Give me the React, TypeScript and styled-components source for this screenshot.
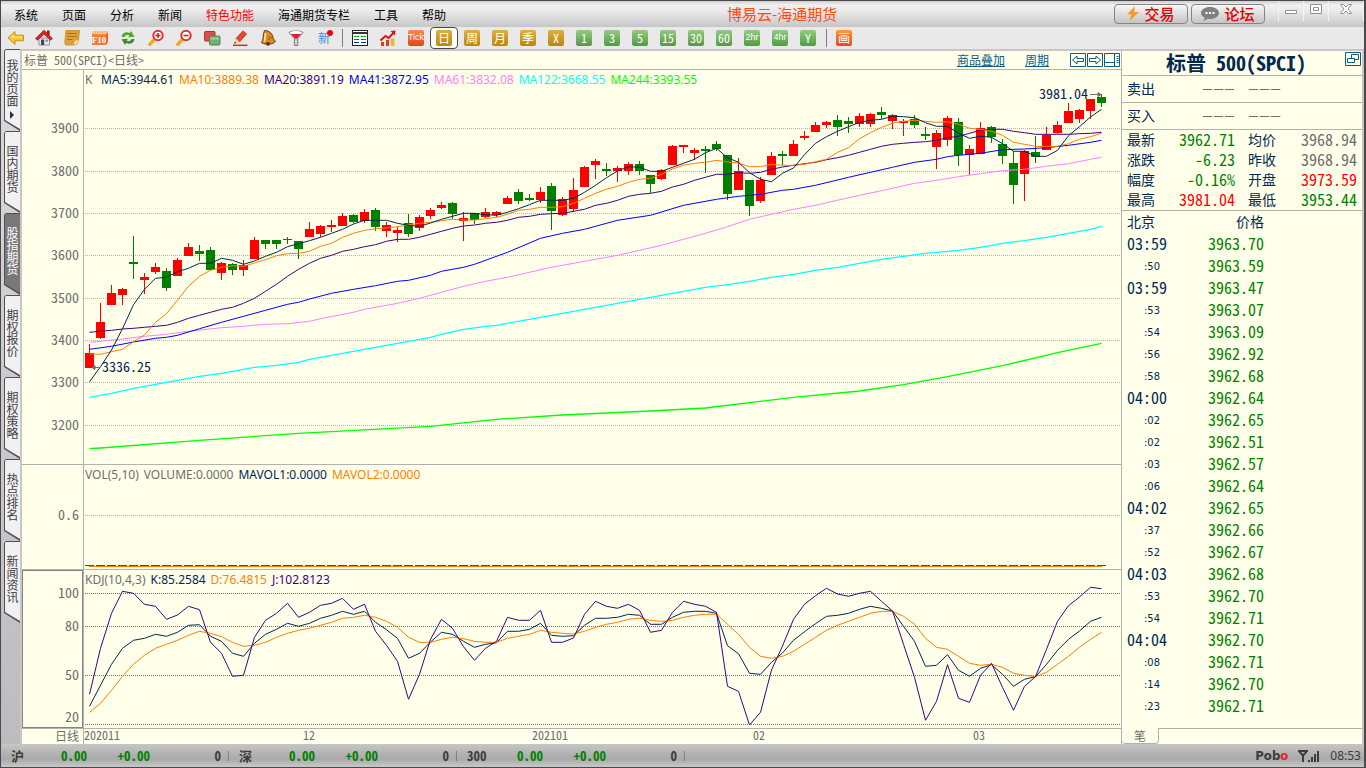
import React from 'react';
import styled, { createGlobalStyle, css } from 'styled-components';

const ink = '#002850';
const paper = '#ffffea';
const rule = '#b4b2b0';
const trim = '#cdc5c5';
const up = '#ff0000';
const down = '#008000';
const mute = '#6e6e6e';

const cjk = '"Noto Sans CJK SC", sans-serif';
const tahoma = '"DejaVu Sans Condensed", "DejaVu Sans", sans-serif';

/* Half-width Latin and digits: every one takes exactly half an em. */
const halfWidth = css`
  font-family: ${cjk};
  font-feature-settings: 'hwid';
`;

const Global = createGlobalStyle`
  *, *::before, *::after { box-sizing: border-box; }
  body { margin: 0; font-family: ${cjk}; font-size: 12px; color: ${ink}; background: ${paper}; }
  button { font: inherit; color: inherit; padding: 0; border: 0; background: none; cursor: pointer; }
  a { color: inherit; }
  svg { display: block; }
`;

/* ---------- window ---------- */

const Window = styled.div`
  display: flex;
  flex-direction: column;
  min-width: 1100px;
  min-height: 100vh;
  border: 1px solid #4c484a;
  border-right-width: 2px;
  background: #e9e9e9;
`;

const Header = styled.header`
  display: flex;
  align-items: center;
  height: 26px;
  background: linear-gradient(#cfcfcf 0, #f1f1f1 4px, #eaeaea 10px, #c6c6c6 100%);
`;

const Menu = styled.nav`
  display: flex;
  gap: 24px;
  padding: 2px 4px 0 13px;
`;

const MenuItem = styled.button<{ $hot?: boolean }>`
  line-height: 20px;
  white-space: nowrap;
  color: ${(p) => (p.$hot ? up : '#000')};
`;

const AppTitle = styled.h1`
  flex: 1;
  margin: 0;
  font-size: 15px;
  font-weight: 400;
  line-height: 24px;
  text-align: center;
  color: #ff4a10;
`;

const HeaderActions = styled.div`
  display: flex;
  gap: 3px;
`;

const ActionButton = styled.button`
  display: flex;
  align-items: center;
  justify-content: center;
  gap: 5px;
  width: 74px;
  height: 20px;
  border: 1px solid #858585;
  border-radius: 4px;
  background: linear-gradient(#f8f8f8, #c4c4c4);
  color: #e00000;
  font-size: 15px;
  font-weight: 500;
  line-height: 18px;
`;

const WindowControls = styled.div`
  display: flex;
  align-self: stretch;
  margin-left: 13px;
`;

const WindowButton = styled.button`
  display: flex;
  justify-content: center;
  width: 25px;
  height: 20px;
  padding-top: 2px;
  border-left: 1px solid #f4f4f4;
  &:last-child { width: 36px; border-right: 1px solid #f4f4f4; }
`;

/* ---------- toolbar ---------- */

const Toolbar = styled.div`
  display: flex;
  align-items: center;
  height: 22px;
  padding-left: 1px;
  background: #e9e9e9;
`;

const Tool = styled.button<{ $on?: boolean }>`
  display: flex;
  align-items: center;
  justify-content: center;
  width: 28px;
  height: 22px;
  border-radius: 4px;
  ${(p) => p.$on && css`border: 1px solid #4a4a4a; background: #fff;`}
`;

const ToolRule = styled.span`
  width: 8px;
  height: 18px;
  background: linear-gradient(#808080, #808080) center / 1px 100% no-repeat;
`;

const tones = {
  gold: 'linear-gradient(#dcb045, #bd8606)',
  green: 'linear-gradient(#93cc82, #529a44)',
  red: 'linear-gradient(#fb9a3c, #ea4420)',
  tick: 'linear-gradient(#f88a4c, #e8401c)',
};

const Badge = styled.span<{ $tone: keyof typeof tones; $small?: boolean }>`
  ${halfWidth}
  display: flex;
  justify-content: center;
  width: 16px;
  height: 16px;
  border-radius: 2px;
  background: ${(p) => tones[p.$tone]};
  color: #fff;
  font-size: 12px;
  line-height: 15px;
  white-space: nowrap;
  ${(p) => p.$small && css`font-family: 'Liberation Sans', sans-serif; font-size: 9px;`}
`;

const NewMark = styled.span`
  position: relative;
  color: #3f8fe0;
  font-size: 12px;
  line-height: 20px;
  &::after {
    content: '';
    position: absolute;
    top: 2px;
    right: -3px;
    width: 6px;
    height: 6px;
    border-radius: 50%;
    background: #f00;
  }
`;

/* ---------- body ---------- */

const Body = styled.div`
  display: flex;
  flex: 1;
`;

const Rail = styled.nav`
  width: 21px;
  padding-left: 3px;
  border-right: 2px solid ${trim};
  background: linear-gradient(#dadadb, #bcbcbe);
`;

const RailTab = styled.button<{ $on?: boolean }>`
  display: block;
  position: relative;
  width: 16px;
  height: 82px;
  background: #505050;
  clip-path: polygon(2px 0, 100% 0, 100% 100%, 0 72px, 0 2px);
  &::before {
    content: '';
    position: absolute;
    inset: 1px 0 0 1px;
    background: ${(p) => (p.$on ? '#787878' : '#f1f0f2')};
    clip-path: polygon(1px 0, 100% 0, 100% 79px, 0 70px, 0 1px);
  }
`;

const RailLabel = styled.span<{ $on?: boolean; $menu?: boolean }>`
  position: relative;
  display: flex;
  align-items: center;
  gap: 4px;
  height: ${(p) => (p.$menu ? 62 : 54)}px;
  width: 16px;
  line-height: 16px;
  font-size: 12px;
  writing-mode: vertical-rl;
  color: ${(p) => (p.$on ? '#fff' : '#404040')};
`;

const Work = styled.main`
  display: flex;
  flex: 1;
  border: solid ${trim};
  border-width: 2px 2px 0 0;
  background: ${paper};
`;

const Charts = styled.section`
  display: flex;
  flex: 1;
  flex-direction: column;
`;

const ChartBar = styled.div`
  display: flex;
  align-items: center;
  height: 19px;
  padding-right: 1px;
  border-bottom: 1px solid ${rule};
`;

const ChartName = styled.h2`
  ${halfWidth}
  flex: 1;
  margin: 0;
  padding-left: 2px;
  font-size: 12px;
  font-weight: 400;
  line-height: 18px;
  color: ${mute};
`;

const BarLink = styled.a`
  margin-right: 20px;
  line-height: 18px;
  color: #0c5c88;
`;

const IconRow = styled.div`
  display: flex;
  align-items: flex-start;
  gap: 1px;
  margin-left: 1px;
`;

const Pane = styled.div<{ $size: number }>`
  display: flex;
  flex: ${(p) => p.$size} 1 ${(p) => p.$size + 1}px;
  border-bottom: 1px solid ${rule};
`;

const Axis = styled.div<{ $focus?: boolean }>`
  position: relative;
  width: 62px;
  border-right: 1px solid ${rule};
  ${(p) => p.$focus && css`box-shadow: inset 0 0 0 1px #858585;`}
`;

const Plot = styled.div`
  position: relative;
  flex: 1;
`;

const Canvas = styled.svg`
  ${halfWidth}
  position: absolute;
  inset: 0;
  width: 100%;
  height: 100%;
  overflow: visible;
  font-size: 14px;
`;

const Legend = styled.p`
  position: relative;
  display: flex;
  gap: 5px;
  margin: 0;
  padding-left: 1px;
  font-family: 'Noto Sans', sans-serif;
  font-size: 12px;
  line-height: 20px;
  white-space: nowrap;
`;

const Value = styled.span<{ $tone: string; $wide?: boolean }>`
  color: ${(p) => p.$tone};
  ${(p) => p.$wide && css`width: 11px;`}
`;

const DateRow = styled.div`
  ${halfWidth}
  display: flex;
  height: 15px;
  line-height: 14px;
  color: ${mute};
`;

const Period = styled.div`
  width: 62px;
  padding-right: 4px;
  border-right: 1px solid ${rule};
  text-align: right;
`;

/* ---------- quote panel ---------- */

const Panel = styled.aside`
  display: flex;
  flex-direction: column;
  width: 241px;
  border-left: 1px solid ${rule};
`;

const PanelTitle = styled.div`
  display: flex;
  justify-content: flex-end;
  height: 25px;
  padding: 1px 1px 0 0;
  border-bottom: 1px solid ${rule};
`;

const Symbol = styled.h2`
  ${halfWidth}
  margin: 0 38px 0 0;
  font-size: 20px;
  font-weight: 700;
  line-height: 22px;
`;

const Side = styled.div`
  display: flex;
  align-items: center;
  height: 27px;
  padding: 0 0 2px 5px;
  border-bottom: 1px solid ${rule};
  font-size: 14px;
`;

const Dashes = styled.span`
  display: flex;
  gap: 2px;
  margin-left: 15px;
  font-family: 'Liberation Serif', serif;
  font-size: 18px;
  line-height: 20px;
  color: ${mute};
  &:first-of-type { margin-left: 48px; }
`;

const Facts = styled.dl`
  display: grid;
  grid-template-columns: 28px 80px 28px 1fr;
  grid-auto-rows: 20px;
  margin: 0;
  padding: 0 5px;
  border-bottom: 1px solid ${rule};
  font-size: 14px;
  line-height: 18px;
  white-space: nowrap;
`;

const FactName = styled.dt`
  &:nth-of-type(even) { margin-left: 13px; }
`;

const FactValue = styled.dd<{ $tone: string }>`
  ${halfWidth}
  margin: 0;
  font-size: 16px;
  text-align: right;
  color: ${(p) => p.$tone};
`;

const Ticks = styled.table`
  border-collapse: collapse;
  margin-left: 5px;
  width: 137px;
`;

const TickHead = styled.th<{ $right?: boolean }>`
  height: 22px;
  padding: 0;
  font-size: 14px;
  font-weight: 400;
  line-height: 20px;
  vertical-align: top;
  text-align: ${(p) => (p.$right ? 'right' : 'left')};
`;

const TickTime = styled.td<{ $short: boolean }>`
  height: 22px;
  padding: 0;
  line-height: 20px;
  vertical-align: top;
  ${(p) => p.$short
    ? css`padding: 2px 0 0 17px; font-family: ${tahoma}; font-size: 11px;`
    : css`${halfWidth} font-size: 16px;`}
`;

const TickPrice = styled.td`
  ${halfWidth}
  padding: 0;
  font-size: 16px;
  line-height: 20px;
  vertical-align: top;
  text-align: right;
  color: ${down};
`;

const PanelTabs = styled.div`
  display: flex;
  height: 16px;
  margin-top: auto;
`;

const PanelTab = styled.button`
  width: 37px;
  border: 1px solid ${rule};
  border-width: 0 1px 1px 0;
  border-radius: 0 0 4px 4px;
  line-height: 15px;
  color: ${mute};
`;

const TabFill = styled.span`
  flex: 1;
  border-top: 1px solid ${rule};
`;

/* ---------- status bar ---------- */

const Status = styled.footer`
  display: flex;
  align-items: center;
  height: 23px;
  padding-left: 1px;
  background: linear-gradient(#c6c6c6, #b4b4b4 9px, #a9a9a9 15px, #c9c9c9 100%);
`;

const Index = styled.div`
  ${halfWidth}
  display: grid;
  grid-template-columns: 40px 45px 63px 71px 8px;
  align-items: center;
  width: 228px;
  font-size: 13px;
  font-weight: 700;
  line-height: 22px;
  text-align: right;
  color: #3c3c3c;
  &::after {
    content: '';
    height: 10px;
    border-right: 1px solid #808080;
  }
`;

const IndexName = styled.span`
  padding-left: 9px;
  text-align: left;
`;

const IndexValue = styled.span<{ $flat?: boolean }>`
  color: ${(p) => (p.$flat ? '#3c3c3c' : down)};
`;

const StatusRight = styled.div`
  display: flex;
  align-items: center;
  gap: 10px;
  margin-left: auto;
  padding-right: 3px;
  font-family: 'Noto Sans', sans-serif;
  font-size: 12px;
  line-height: 22px;
  color: #3c3c3c;
`;

const Brand = styled.strong`
  font-size: 13px;
  font-family: ${tahoma};
`;

const BrandDot = styled.span`
  color: #f02020;
`;

/* ---------- data ---------- */

const menus = ['系统', '页面', '分析', '新闻', '特色功能', '海通期货专栏', '工具', '帮助'];
const railTabs = ['我的页面', '国内期货', '股指期货', '期权报价', '期权策略', '热点排名', '新闻资讯'];

type Candle = [up: 0 | 1, high: number, top: number, bottom: number, low: number];

const candles: Candle[] = [
  [1, 344, 353, 368, 368], [1, 303, 322, 338, 339], [1, 285, 293, 305, 305], [1, 288, 289, 295, 305],
  [0, 236, 262, 264, 279], [1, 273, 277, 280, 294], [1, 263, 267, 272, 274], [0, 268, 271, 288, 291],
  [1, 258, 260, 276, 276], [1, 243, 247, 256, 256], [0, 245, 251, 254, 261], [0, 247, 250, 270, 270],
  [1, 262, 263, 273, 280], [0, 263, 264, 270, 275], [1, 260, 265, 270, 276], [1, 237, 240, 259, 259],
  [0, 240, 240, 244, 249], [0, 240, 240, 244, 249], [0, 237, 239, 240, 244], [0, 241, 241, 249, 259],
  [1, 222, 229, 237, 237], [1, 225, 226, 234, 237], [1, 220, 225, 227, 232], [1, 213, 216, 226, 226],
  [0, 214, 215, 222, 223], [1, 209, 212, 221, 223], [0, 208, 210, 227, 231], [1, 222, 225, 231, 237],
  [1, 227, 230, 233, 242], [0, 214, 223, 234, 237], [1, 215, 217, 228, 231], [1, 208, 210, 216, 219],
  [1, 202, 205, 208, 209], [0, 202, 203, 214, 219], [1, 212, 218, 221, 241], [0, 213, 213, 220, 224],
  [1, 208, 212, 217, 218], [1, 211, 212, 215, 217], [1, 196, 198, 204, 204], [0, 189, 192, 201, 204],
  [0, 194, 198, 200, 201], [1, 187, 192, 200, 203], [0, 183, 186, 211, 230], [1, 197, 199, 215, 216],
  [1, 178, 190, 209, 212], [1, 166, 167, 187, 187], [1, 159, 161, 165, 179], [0, 163, 169, 171, 176],
  [1, 166, 168, 171, 182], [1, 162, 164, 171, 175], [0, 161, 164, 171, 175], [0, 175, 175, 184, 193],
  [1, 169, 170, 179, 180], [1, 145, 146, 165, 165], [1, 145, 145, 147, 153], [1, 148, 150, 153, 160],
  [0, 146, 149, 151, 173], [0, 141, 144, 149, 151], [0, 155, 155, 194, 200], [1, 158, 171, 190, 190],
  [0, 180, 180, 206, 216], [1, 177, 180, 201, 203], [1, 152, 156, 175, 175], [0, 151, 154, 156, 165],
  [1, 140, 144, 156, 156], [1, 131, 136, 138, 140], [1, 122, 125, 132, 132], [1, 121, 122, 125, 128],
  [0, 115, 120, 127, 136], [0, 117, 121, 124, 133], [1, 113, 116, 124, 127], [1, 113, 114, 124, 127],
  [0, 107, 112, 115, 119], [1, 114, 115, 121, 129], [1, 119, 121, 123, 136], [0, 115, 119, 125, 128],
  [0, 127, 134, 136, 140], [1, 130, 133, 147, 169], [1, 116, 118, 140, 146], [0, 118, 122, 155, 166],
  [1, 145, 149, 155, 175], [1, 122, 128, 154, 154], [0, 126, 127, 137, 143], [0, 139, 144, 156, 164],
  [0, 151, 163, 185, 204], [1, 150, 151, 174, 201], [0, 136, 152, 157, 163], [1, 127, 135, 150, 150],
  [1, 121, 125, 133, 134], [1, 103, 111, 123, 123], [1, 109, 110, 119, 123], [1, 99, 99, 111, 119],
  [0, 94, 97, 103, 107],
];

const barX = (i: number) => 89.5 + 11 * i;

/* Levels are kept in thirds of a unit below a base line. */
const level = (base: number, thirds: number[]) => thirds.map((v) => base + v / 3);

const everyBar = (ys: number[]) => ys.map((y, i) => `${barX(i)},${y.toFixed(1)}`).join(' ');

/* [bar, level] pairs for the slow averages, joined by straight runs. */
const sparse = (base: number, pairs: number[][]) =>
  pairs.map(([i, v]) => `${barX(i)},${(base + v / 3).toFixed(1)}`);

const ma5 = [
  ...level(160, [665, 620, 570, 506, 434, 388, 355, 352, 335, 325, 310, 310, 295, 301, 313, 303, 289, 277, 260, 251, 242, 232, 220, 208, 192, 181, 181, 181, 190, 196, 199]),
  ...level(90, [399, 388, 379, 370, 370, 374, 376, 367, 356, 344, 331, 331, 331, 325, 307, 286, 263, 243, 230, 232, 244, 244, 232, 220, 208, 188, 175, 203, 217, 248, 268, 275, 250]),
  ...level(80, [264, 224, 190, 170, 154, 140, 127, 121, 118, 109, 110, 113, 128, 139, 139, 160, 175, 169, 172, 191, 214, 214, 229, 229, 211, 167, 140, 111, 88]),
];

const ma10 = [
  ...level(160, [582, 583, 575, 568, 545, 525, 487, 461, 420, 379, 349, 331, 322, 317, 319, 309, 299, 287, 281, 280, 274, 259, 250, 232, 220, 211, 206, 204, 200, 194, 190, 187, 182, 178]),
  ...level(90, [390, 390, 386, 382, 373, 361, 358, 352, 352, 350, 340, 325, 310, 298, 289, 277, 268, 265, 253, 237, 226, 220, 217, 211, 216, 219, 230, 230, 223, 226]),
  ...level(80, [256, 253, 245, 238, 217, 203, 176, 158, 142, 130, 124, 121, 124, 127, 125, 133, 145, 148, 154, 166, 187, 193, 199, 200, 199, 191, 178, 170, 160]),
];

const ma20 = [
  ...level(160, [517, 514, 511, 507, 505, 502, 499, 496, 487, 475, 466, 457, 448, 442, 430, 415, 394, 373, 349, 328, 310, 295, 286, 274, 268, 260, 254, 244, 238, 238, 232, 223, 214, 205]),
  ...level(90, [408, 405, 400, 397, 391, 382, 379, 373, 371, 370, 364, 358, 346, 340, 331, 319, 313, 310, 304, 291, 283, 271, 262, 253, 253, 248, 250, 247, 238, 231]),
  ...level(80, [256, 251, 247, 239, 233, 226, 217, 208, 199, 193, 190, 187, 185, 181, 173, 169, 160, 151, 148, 148, 154, 158, 163, 163, 163, 163, 161, 160, 157]),
];

const ma41 = [
  ...sparse(160, [[0, 568], [2, 559], [4, 546], [6, 535], [7, 532], [8, 526], [10, 506], [12, 487], [14, 469], [16, 451], [18, 433], [19, 427], [20, 417], [22, 400], [24, 388], [26, 377], [28, 364], [29, 361], [31, 346]]),
  ...sparse(90, [[32, 544], [34, 532], [35, 523], [38, 487], [41, 445], [43, 430], [45, 418], [48, 391], [51, 376], [54, 346], [57, 328], [59, 319], [61, 313], [63, 301]]),
  ...sparse(80, [[64, 328], [66, 316], [69, 292], [71, 277], [73, 262], [75, 247], [77, 238], [78, 230], [79, 226], [81, 220], [83, 209], [85, 207], [87, 203], [89, 196], [91, 187], [92, 181]]),
];

const ma61 = [
  ...sparse(160, [[0, 547], [3, 537], [5, 529], [7, 523], [9, 514], [12, 503], [14, 499], [16, 493], [18, 491], [20, 484], [21, 476], [24, 457], [25, 448], [28, 430], [30, 415]]),
  ...sparse(90, [[32, 607], [34, 589], [36, 574], [38, 562], [40, 547], [42, 532], [45, 514], [48, 496], [50, 481], [52, 466], [54, 448], [56, 430], [58, 410], [60, 388], [62, 373]]),
  ...sparse(80, [[64, 388], [66, 376], [68, 361], [70, 346], [72, 332], [73, 325], [75, 310], [77, 301], [79, 290], [81, 281], [83, 272], [85, 268], [87, 259], [89, 251], [91, 238], [92, 232]]),
];

const ma122 = [
  ...sparse(160, [[0, 712], [2, 700], [4, 685], [7, 667], [10, 649], [12, 640], [15, 622], [17, 616], [19, 607], [20, 598], [24, 574], [28, 550], [31, 532], [32, 523]]),
  ...sparse(90, [[34, 718], [36, 709], [37, 706], [40, 688], [44, 664], [48, 640], [52, 616], [56, 592], [58, 584], [60, 574], [62, 562]]),
  ...sparse(80, [[64, 583], [66, 571], [68, 562], [70, 550], [72, 538], [74, 529], [76, 520], [79, 511], [81, 502], [83, 490], [85, 482], [87, 472], [89, 460], [91, 448], [92, 439]]),
];

const ma244 = sparse(80, [[0, 1106], [1, 1104], [10, 1081], [19, 1060], [31, 1039], [37, 1018], [43, 1005], [51, 993], [56, 984], [64, 952], [70, 933], [74, 914], [78, 890], [83, 857], [88, 818], [92, 790]]);

const kdjJ = level(560, [403, 265, 160, 94, 100, 133, 139, 178, 165, 139, 149, 247, 280, 349, 346, 232, 181, 160, 130, 172, 157, 136, 130, 115, 148, 133, 214, 256, 304, 418, 343, 238, 178, 205, 260, 301, 265, 244, 172, 181, 181, 151, 247, 247, 234, 163, 124, 139, 145, 133, 151, 217, 211, 157, 124, 133, 139, 157, 379, 394, 495, 457, 330, 258, 178, 133, 107, 85, 102, 109, 100, 94, 124, 153, 253, 352, 481, 424, 314, 415, 427, 346, 310, 382, 451, 379, 350, 268, 184, 137, 111, 82, 86]);

const kdjK = level(560, [439, 376, 313, 265, 241, 235, 223, 229, 217, 196, 194, 229, 244, 280, 289, 250, 223, 208, 190, 199, 190, 175, 166, 154, 163, 154, 187, 209, 235, 295, 280, 246, 217, 223, 244, 262, 253, 248, 214, 214, 208, 190, 226, 229, 227, 196, 175, 175, 172, 163, 166, 193, 193, 172, 157, 154, 154, 160, 257, 281, 340, 343, 307, 279, 241, 215, 191, 169, 166, 160, 148, 139, 145, 153, 199, 244, 319, 316, 284, 331, 349, 325, 314, 343, 379, 358, 350, 313, 271, 238, 213, 184, 172]);

const kdjD = level(560, [457, 430, 391, 349, 313, 286, 265, 253, 241, 226, 214, 220, 230, 247, 259, 256, 247, 232, 220, 211, 205, 196, 187, 175, 172, 166, 172, 184, 202, 232, 247, 247, 238, 232, 236, 244, 247, 247, 235, 229, 223, 211, 217, 220, 222, 214, 202, 193, 187, 178, 175, 181, 184, 181, 172, 166, 163, 163, 193, 223, 262, 289, 295, 289, 274, 253, 232, 211, 196, 184, 172, 160, 154, 154, 169, 193, 235, 262, 268, 289, 310, 316, 313, 322, 340, 346, 350, 337, 313, 289, 262, 238, 217]);

const facts: [string, string, string][] = [
  ['最新', '3962.71', down], ['均价', '3968.94', mute],
  ['涨跌', '-6.23', down], ['昨收', '3968.94', mute],
  ['幅度', '-0.16%', down], ['开盘', '3973.59', up],
  ['最高', '3981.04', up], ['最低', '3953.44', down],
];

const ticks: [string, string][] = [
  ['03:59', '3963.70'], [':50', '3963.59'], ['03:59', '3963.47'], [':53', '3963.07'],
  [':54', '3963.09'], [':56', '3962.92'], [':58', '3962.68'], ['04:00', '3962.64'],
  [':02', '3962.65'], [':02', '3962.51'], [':03', '3962.57'], [':06', '3962.64'],
  ['04:02', '3962.65'], [':37', '3962.66'], [':52', '3962.67'], ['04:03', '3962.68'],
  [':53', '3962.70'], [':54', '3962.71'], ['04:04', '3962.70'], [':08', '3962.71'],
  [':14', '3962.70'], [':23', '3962.71'],
];

/* ---------- icons ---------- */

const Icon = ({ children }: { children: React.ReactNode }) => (
  <svg width="18" height="18" viewBox="0 0 18 18" fill="none" aria-hidden="true">{children}</svg>
);

const BackIcon = () => (
  <Icon>
    <path d="M1 9 8 2.5v3.7h8.5v5.6H8v3.7z" fill="#f9c431" stroke="#cf8d12" strokeLinejoin="round" />
    <path d="M3 8.8 7 5.2v2.2h8.4v1.4z" fill="#ffe588" />
  </Icon>
);
const HomeIcon = () => (
  <Icon>
    <path d="M4 9h10.500v7H4z" fill="#e9ecef" stroke="#8c9298" />
    <path d="M12 1.500h2.600v5H12z" fill="#8c1d1d" />
    <path d="M.5 9.600 9 1.200l8.500 8.400-1.900 1.600L9 5.200 2.400 11.200z" fill="#e02424" stroke="#a01212" strokeWidth=".7" />
    <path d="M6 10.500h3.200V16H6z" fill="#47464f" />
    <path d="M10.600 10.500h2.600v2.400h-2.600z" fill="#7f96b8" />
  </Icon>
);
const NoteIcon = () => (
  <Icon>
    <path d="M3 1.500h13.500l-1 9.500c-.2 3-1.800 5-4 5H2.500L1.800 13z" fill="#dfa137" stroke="#c98a22" strokeWidth=".8" />
    <path d="M15.500 11.500c-2.500-.7-4.500.7-4.500 4.300 2.300 0 4-1.600 4.500-4.300z" fill="#fbe0a0" />
    <path d="M4.500 4.500H14M4.500 7.500H14M4 10.500h5.500" stroke="#a9761d" strokeWidth="1" />
  </Icon>
);
const F10Icon = () => (
  <Icon>
    <path d="M1 5 3 2h10l4 1v10l-2 3H1.500z" fill="#f0641c" />
    <path d="M1 5h14v11H1z" fill="#f47a35" />
    <path d="M3 2h10l4 1-2 2.200H1z" fill="#fbc37a" />
    <text x="8" y="14" textAnchor="middle" fontSize="9" fontWeight="700" fontFamily="Liberation Serif, serif" fill="#fff">F10</text>
  </Icon>
);
const RefreshIcon = () => (
  <Icon>
    <path d="M2.500 8C2.800 3.800 7 2.300 10.700 3.900l1.300-1.900 3.500 5.800-6.300.4 1.100-1.900C8.300 5.500 6 6 5.500 8z" fill="#57a822" />
    <path d="M15.500 10c-.3 4.200-4.500 5.700-8.200 4.100L6 16l-3.500-5.800 6.300-.4-1.100 1.900c2 .8 4.300.3 4.800-1.700z" fill="#3f8f1d" />
  </Icon>
);
const ZoomIcon = ({ plus }: { plus?: boolean }) => (
  <Icon>
    <path d="M7 11 2.800 15.200" stroke="#f6a81c" strokeWidth="3.400" strokeLinecap="round" />
    <circle cx="11" cy="6.500" r="4.700" fill="#fff" stroke="#e43030" strokeWidth="2" />
    <path d={plus ? 'M8.500 6.500h5M11 4v5' : 'M8.500 6.500h5'} stroke="#e01818" strokeWidth="1.600" />
  </Icon>
);
const OverlayIcon = () => (
  <Icon>
    <rect x="1.500" y="2.500" width="10.500" height="9.500" rx="1" fill="#e24b4b" stroke="#b52c2c" />
    <rect x="6.500" y="7" width="10.500" height="9" rx="1" fill="#74ad77" stroke="#4f8553" />
    <path d="M7.500 8.500h8.500v2H7.500z" fill="#a2cca4" />
  </Icon>
);
const PenIcon = () => (
  <Icon>
    <path d="M5 9.500 12 1.800l3.600 3.300L8.500 13z" fill="#ee4429" stroke="#bb2914" strokeWidth=".7" />
    <path d="M5 9.500 3.200 14.500 8.500 13z" fill="#f6d3a0" />
    <path d="m3.900 12.500-.8 2.200 2.300-.6z" fill="#333" />
    <path d="M2 16.300h14.500" stroke="#e22" strokeWidth="1.500" />
  </Icon>
);
const BellIcon = () => (
  <Icon>
    <path d="M5.500 1.500C10 1.500 14.500 5 14 9.500l2.500 2.700c-2 3-8.500 4.300-14 1.500 2.500-3 1-8 3-12.200z" fill="#d78a26" stroke="#6a3c0a" />
    <path d="M6.500 4C6 8 6.300 10.500 5.300 12.600" stroke="#ffdf94" strokeWidth="1.800" />
    <circle cx="9" cy="14.800" r="1.900" fill="#5b2d08" />
    <path d="M14 9.500c-1.500-2.500-4.500-1.500-4 1.500" stroke="#8a4e10" />
  </Icon>
);
const FunnelIcon = () => (
  <Icon>
    <path d="M2 3.500c3-2 11-2 14 0L10.800 9.600v6.900H7.400V9.600z" fill="#cfd3d6" stroke="#767b80" />
    <ellipse cx="9" cy="3.700" rx="6" ry="1.600" fill="#fff" />
    <path d="M4 5h10L9 10.500z" fill="#df1f2d" />
  </Icon>
);
const TableIcon = () => (
  <Icon>
    <rect x="1.500" y="1.500" width="15" height="15" fill="#fff" stroke="#222" />
    <path d="M1 4h16" stroke="#333" strokeWidth="2" />
    <path d="M3 7.500h5M10 7.500h5" stroke="#0a0" />
    <path d="M3 10.500h5M10 10.500h5" stroke="#e00" />
    <path d="M3 13.500h5M10 13.500h5" stroke="#12308c" />
  </Icon>
);
const TrendIcon = () => (
  <Icon>
    <path d="M2 13h3v4H2zM7 11h3v6H7z" fill="#e23a20" /><path d="M12 9.500h3.500V17H12z" fill="#f3b42c" />
    <path d="m1.500 11.500 5-4.500 3 2L15 3.500" stroke="#e01010" strokeWidth="2" />
    <path d="m11.500 2 5-.5-.5 5z" fill="#e01010" />
  </Icon>
);

const badges: { label: string; tone: keyof typeof tones; small?: boolean; on?: boolean }[] = [
  { label: '日', tone: 'gold', on: true }, { label: '周', tone: 'gold' }, { label: '月', tone: 'gold' },
  { label: '季', tone: 'gold' }, { label: 'X', tone: 'gold' }, { label: '1', tone: 'green' },
  { label: '3', tone: 'green' }, { label: '5', tone: 'green' }, { label: '15', tone: 'green' },
  { label: '30', tone: 'green' }, { label: '60', tone: 'green' }, { label: '2hr', tone: 'green', small: true },
  { label: '4hr', tone: 'green', small: true }, { label: 'Y', tone: 'green' },
];

const leftTools: [string, React.ReactNode][] = [
  ['后退', <BackIcon />], ['首页', <HomeIcon />], ['公告', <NoteIcon />], ['资料', <F10Icon />],
  ['刷新', <RefreshIcon />], ['放大', <ZoomIcon plus />], ['缩小', <ZoomIcon />], ['叠加', <OverlayIcon />],
  ['画线', <PenIcon />], ['预警', <BellIcon />], ['筛选', <FunnelIcon />], ['新功能', <NewMark>新</NewMark>],
];

const BoxIcon = ({ d }: { d: string }) => (
  <svg width="16" height="14" viewBox="0 0 16 14" fill="none" stroke="#0c5c88" aria-hidden="true">
    <path d="M.5.5h15v13H.5z" />
    <path d={d} />
  </svg>
);

/* ---------- charts ---------- */

interface FrameProps { top: number; size: number; labels: [string, number][]; focus?: boolean }

const AxisLabels = ({ top, size, labels, focus }: FrameProps) => (
  <Axis $focus={focus}>
    <Canvas>
      {labels.map(([text, y]) => (
        <text key={text} x="57" y={`${((y - top) / size) * 100}%`} dy="5" textAnchor="end" fill={mute}>{text}</text>
      ))}
    </Canvas>
  </Axis>
);

const Grid = ({ ys, tone }: { ys: number[]; tone: string }) => (
  <g stroke={tone} strokeDasharray="1 1" shapeRendering="crispEdges">
    {ys.map((y) => <path key={y} d={`M85 ${y + 0.5}H1121`} />)}
  </g>
);

const priceLabels: [string, number][] = [
  ['3900', 128], ['3800', 171], ['3700', 213], ['3600', 255],
  ['3500', 298], ['3400', 340], ['3300', 382], ['3200', 425],
];

const PricePane = () => (
  <Pane $size={394}>
    <AxisLabels top={70} size={394} labels={priceLabels} />
    <Plot>
      <Canvas>
        <svg viewBox="84 70 1037 394" preserveAspectRatio="none" width="100%" height="100%">
          <Grid ys={priceLabels.map(([, y]) => y)} tone="#b8b6ac" />
          <g shapeRendering="crispEdges">
            {candles.map(([rise, high, top, bottom, low], i) => (
              <g key={i} fill={rise ? up : down}>
                <rect x={barX(i) - 0.5} y={high} width="1" height={low - high} />
                <rect x={barX(i) - 4.5} y={top} width="9" height={Math.max(bottom - top, 1)} />
              </g>
            ))}
          </g>
          <g fill="none">
            <polyline points={ma244.join(' ')} stroke="#00ff00" strokeWidth="1.300" />
            <polyline points={ma122.join(' ')} stroke="#00ffff" strokeWidth="1.300" />
            <polyline points={ma61.join(' ')} stroke="#ff80ff" />
            <polyline points={ma41.join(' ')} stroke="#0000ff" />
            <polyline points={everyBar(ma20)} stroke="#400080" />
            <polyline points={everyBar(ma10)} stroke="#ff8000" />
            <polyline points={everyBar(ma5)} stroke={ink} />
          </g>
          <g stroke="#707070" fill="#707070">
            <path d="M92 367.500h8M95 365.500v4l-3-2z" />
            <path d="M1090 94.500h10M1098 92.500v4l3-2z" />
          </g>
        </svg>
        <text x={`${(18 / 1037) * 100}%`} y={`${(297 / 394) * 100}%`} dy="5" fill={ink}>3336.25</text>
        <text x={`${(955 / 1037) * 100}%`} y={`${(24 / 394) * 100}%`} dy="5" fill={ink}>3981.04</text>
      </Canvas>
      <Legend>
        <Value $tone={mute} $wide>K</Value>
        <Value $tone={ink}>MA5:3944.61</Value>
        <Value $tone="#ff8000">MA10:3889.38</Value>
        <Value $tone="#400080">MA20:3891.19</Value>
        <Value $tone="#0000ff">MA41:3872.95</Value>
        <Value $tone="#ff80ff">MA61:3832.08</Value>
        <Value $tone="#00ffff">MA122:3668.55</Value>
        <Value $tone="#00ff00">MA244:3393.55</Value>
      </Legend>
    </Plot>
  </Pane>
);

const VolumePane = () => (
  <Pane $size={104}>
    <AxisLabels top={465} size={104} labels={[['0.6', 515]]} />
    <Plot>
      <Canvas>
        <svg viewBox="84 465 1037 104" preserveAspectRatio="none" width="100%" height="100%">
          <Grid ys={[515]} tone="#b8b6ac" />
          <g shapeRendering="crispEdges">
            {candles.map(([rise], i) => (
              <rect key={i} x={barX(i) - 4.5} y="565" width="9" height="1" fill={rise ? up : down} />
            ))}
            <path d="M89 566.500H1102" stroke="#ff8000" />
          </g>
        </svg>
      </Canvas>
      <Legend>
        <Value $tone={mute}>VOL(5,10)</Value>
        <Value $tone={mute}>VOLUME:0.0000</Value>
        <Value $tone={ink}>MAVOL1:0.0000</Value>
        <Value $tone="#ff8000">MAVOL2:0.0000</Value>
      </Legend>
    </Plot>
  </Pane>
);

const KdjPane = () => (
  <Pane $size={158}>
    <AxisLabels top={570} size={158} focus labels={[['100', 593], ['80', 626], ['50', 675], ['20', 717]]} />
    <Plot>
      <Canvas>
        <svg viewBox="84 570 1037 158" preserveAspectRatio="none" width="100%" height="100%">
          <Grid ys={[593, 626, 675, 724]} tone="#747268" />
          <g fill="none">
            <polyline points={everyBar(kdjK)} stroke={ink} />
            <polyline points={everyBar(kdjD)} stroke="#ff8000" />
            <polyline points={everyBar(kdjJ)} stroke="#400080" />
          </g>
        </svg>
      </Canvas>
      <Legend>
        <Value $tone={mute}>KDJ(10,4,3)</Value>
        <Value $tone={ink}>K:85.2584</Value>
        <Value $tone="#ff8000">D:76.4815</Value>
        <Value $tone="#400080">J:102.8123</Value>
      </Legend>
    </Plot>
  </Pane>
);

const dates: [string, number][] = [['202011', 0], ['12', 219], ['202101', 448], ['02', 669], ['03', 889]];

const DateAxis = () => (
  <DateRow>
    <Period>日线</Period>
    <Plot>
      <Canvas>
        {dates.map(([text, x]) => (
          <text key={text} x={`${(x / 1037) * 100}%`} y="11" fontSize="12" fill={mute}>{text}</text>
        ))}
      </Canvas>
    </Plot>
  </DateRow>
);

const Dash3 = () => (
  <Dashes><span>–</span><span>–</span><span>–</span></Dashes>
);

export default function App() {
  return (
    <Window>
      <Global />
      <Header>
        <Menu>
          {menus.map((m) => <MenuItem key={m} $hot={m === '特色功能'}>{m}</MenuItem>)}
        </Menu>
        <AppTitle>博易云-海通期货</AppTitle>
        <HeaderActions>
          <ActionButton>
            <svg width="12" height="16" viewBox="0 0 12 16" aria-hidden="true">
              <path d="M8 0 0 8.500h4.500L2.500 15 12 6H7z" fill="#f59a23" />
            </svg>
            交易
          </ActionButton>
          <ActionButton>
            <svg width="18" height="14" viewBox="0 0 18 14" aria-hidden="true">
              <path d="M9 0c5 0 9 2.600 9 6s-4 6-9 6c-1 0-1.700-.1-2.500-.3C5.500 13 4 13.700 2.500 13.700c.8-.9 1.200-2 1.200-3C1.400 9.700 0 8 0 6c0-3.400 4-6 9-6z" fill="#808080" />
              <path d="M4.500 5h2v2h-2zM8 5h2v2H8zM11.500 5h2v2h-2z" fill="#fff" />
            </svg>
            论坛
          </ActionButton>
        </HeaderActions>
        <WindowControls>
          <WindowButton aria-label="最小化">
            <svg width="14" height="14" viewBox="0 0 14 14"><path d="M1.500 7.500h11v3h-11z" fill="#fff" stroke="#909090" /></svg>
          </WindowButton>
          <WindowButton aria-label="最大化">
            <svg width="14" height="14" viewBox="0 0 14 14"><path d="M1.500 1.500h11v9h-11zM4.500 4.500h5v3h-5z" fill="#fff" stroke="#909090" /></svg>
          </WindowButton>
          <WindowButton aria-label="关闭">
            <svg width="14" height="14" viewBox="0 0 14 14"><path d="M1.500 1.500h3L7 4l2.500-2.500h3L9 6l3.500 4.500h-3L7 8l-2.500 2.500h-3L5 6z" fill="#fff" stroke="#909090" /></svg>
          </WindowButton>
        </WindowControls>
      </Header>

      <Toolbar>
        {leftTools.map(([name, icon]) => <Tool key={name} aria-label={name}>{icon}</Tool>)}
        <ToolRule />
        <Tool aria-label="报价"><TableIcon /></Tool>
        <Tool aria-label="走势"><TrendIcon /></Tool>
        <Tool><Badge $tone="tick" $small>Tick</Badge></Tool>
        {badges.map((b) => (
          <Tool key={b.label} $on={b.on}><Badge $tone={b.tone} $small={b.small}>{b.label}</Badge></Tool>
        ))}
        <ToolRule />
        <Tool><Badge $tone="red">画</Badge></Tool>
      </Toolbar>

      <Body>
        <Rail>
          {railTabs.map((t, i) => (
            <RailTab key={t} $on={i === 2}>
              <RailLabel $on={i === 2} $menu={i === 0}>
                {t}
                {i === 0 && (
                  <svg width="4" height="8" viewBox="0 0 4 8" aria-hidden="true"><path d="M0 0l4 4-4 4z" fill="#303030" /></svg>
                )}
              </RailLabel>
            </RailTab>
          ))}
        </Rail>
        <Work>
          <Charts>
            <ChartBar>
              <ChartName>标普 500(SPCI)&lt;日线&gt;</ChartName>
              <BarLink href="#overlay">商品叠加</BarLink>
              <BarLink href="#period">周期</BarLink>
              <IconRow>
                <button aria-label="向左"><BoxIcon d="M2.500 7 7 3v2.500h6.500v3H7V11z" /></button>
                <button aria-label="向右"><BoxIcon d="M13.500 7 9 3v2.500H2.500v3H9V11z" /></button>
                <button aria-label="侧栏"><BoxIcon d="M10.500 1v12M1 9.500h9M12.500 3.500h2M12.500 5.500h2M12.500 7.500h2M12.500 9.500h2" /></button>
              </IconRow>
            </ChartBar>
            <PricePane />
            <VolumePane />
            <KdjPane />
            <DateAxis />
          </Charts>
          <Panel>
            <PanelTitle>
              <Symbol>标普 500(SPCI)</Symbol>
              <IconRow>
                <button aria-label="还原"><BoxIcon d="M6.500 6V2.500h7v5H10M2.500 6.500h7v4h-7z" /></button>
              </IconRow>
            </PanelTitle>
            <Side>卖出<Dash3 /><Dash3 /></Side>
            <Side>买入<Dash3 /><Dash3 /></Side>
            <Facts>
              {facts.map(([name, value, tone]) => (
                <React.Fragment key={name}>
                  <FactName>{name}</FactName>
                  <FactValue $tone={tone}>{value}</FactValue>
                </React.Fragment>
              ))}
            </Facts>
            <Ticks>
              <thead>
                <tr><TickHead scope="col">北京</TickHead><TickHead scope="col" $right>价格</TickHead></tr>
              </thead>
              <tbody>
                {ticks.map(([time, price], i) => (
                  <tr key={i}>
                    <TickTime $short={time.length === 3}>{time}</TickTime>
                    <TickPrice>{price}</TickPrice>
                  </tr>
                ))}
              </tbody>
            </Ticks>
            <PanelTabs>
              <PanelTab>笔</PanelTab>
              <TabFill />
            </PanelTabs>
          </Panel>
        </Work>
      </Body>

      <Status>
        {['沪', '深', '300'].map((name) => (
          <Index key={name}>
            <IndexName>{name}</IndexName>
            <IndexValue>0.00</IndexValue>
            <IndexValue>+0.00</IndexValue>
            <IndexValue $flat>0</IndexValue>
          </Index>
        ))}
        <StatusRight>
          <Brand>Pob<BrandDot>o</BrandDot></Brand>
          <svg width="22" height="12" viewBox="0 0 22 12" aria-label="信号">
            <path d="M0 0h10v1.500L6 6v6H4V6L0 1.500z" fill="#3c3c3c" />
            <path d="M3 2h4L5 4z" fill="#b0b0b0" />
            <path d="M10 10h2v2h-2zM13 7h2v5h-2zM16 4h2v8h-2zM19 1h2v11h-2z" fill="#3c3c3c" />
          </svg>
          <span>08:53</span>
        </StatusRight>
      </Status>
    </Window>
  );
}
